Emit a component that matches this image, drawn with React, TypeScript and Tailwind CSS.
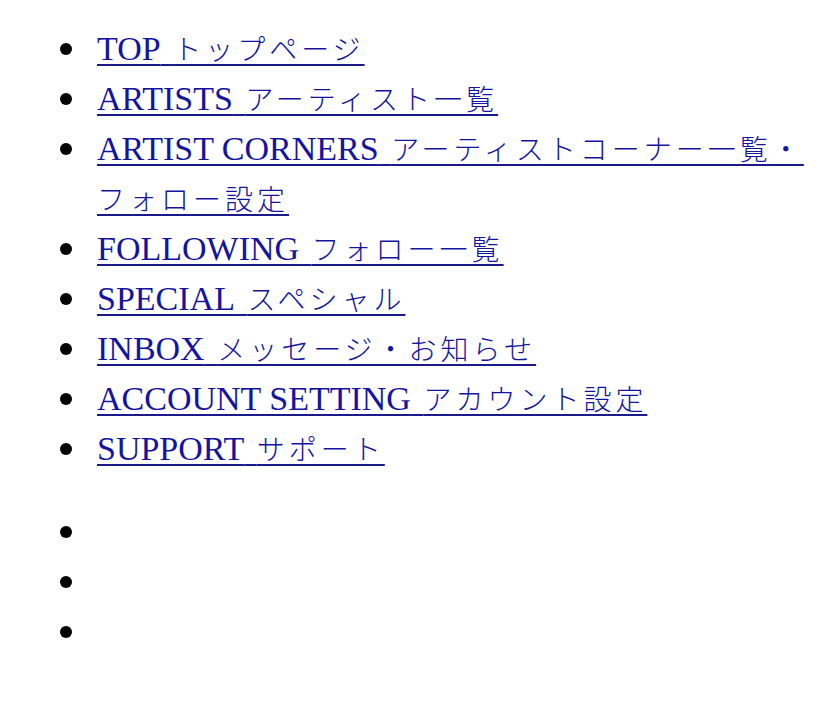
import React from 'react';

const links: { en: string; ja: string }[] = [
    { en: 'TOP', ja: 'トップページ' },
    { en: 'ARTISTS', ja: 'アーティスト一覧' },
    { en: 'ARTIST CORNERS', ja: 'アーティストコーナー一覧・フォロー設定' },
    { en: 'FOLLOWING', ja: 'フォロー一覧' },
    { en: 'SPECIAL', ja: 'スペシャル' },
    { en: 'INBOX', ja: 'メッセージ・お知らせ' },
    { en: 'ACCOUNT SETTING', ja: 'アカウント設定' },
    { en: 'SUPPORT', ja: 'サポート' },
];

const Bullet = () => (
    <span className="flex h-[50px] w-[37px] shrink-0 items-center">
        <span className="h-[12px] w-[12px] rounded-full bg-black" />
    </span>
);

export default function App() {
    return (
        <div className="min-h-screen bg-white pt-[24px] font-['Liberation_Serif','Noto_Sans_CJK_JP',serif] text-[34px] text-black">
            {/* main navigation */}
            <ul className="pl-[60px] pr-[12px]">
                {links.map((link) => (
                    <li key={link.en} className="flex leading-[50px]">
                        <Bullet />
                        <div>
                            <a href="#" className="text-[#1414a0] underline decoration-[#1a1a8a] decoration-2 underline-offset-[4px]">
                                {link.en}
                                <span className="[word-spacing:4px]">{' '}</span>
                                <span className="font-['Noto_Sans_CJK_JP',sans-serif] text-[28px] leading-none font-light tracking-[4px]">
                                    {link.ja}
                                </span>
                            </a>
                        </div>
                    </li>
                ))}
            </ul>

            {/* empty items */}
            <ul className="mt-[33px] pl-[60px]">
                <li className="flex"><Bullet /></li>
                <li className="flex"><Bullet /></li>
                <li className="flex"><Bullet /></li>
            </ul>
        </div>
    );
}
